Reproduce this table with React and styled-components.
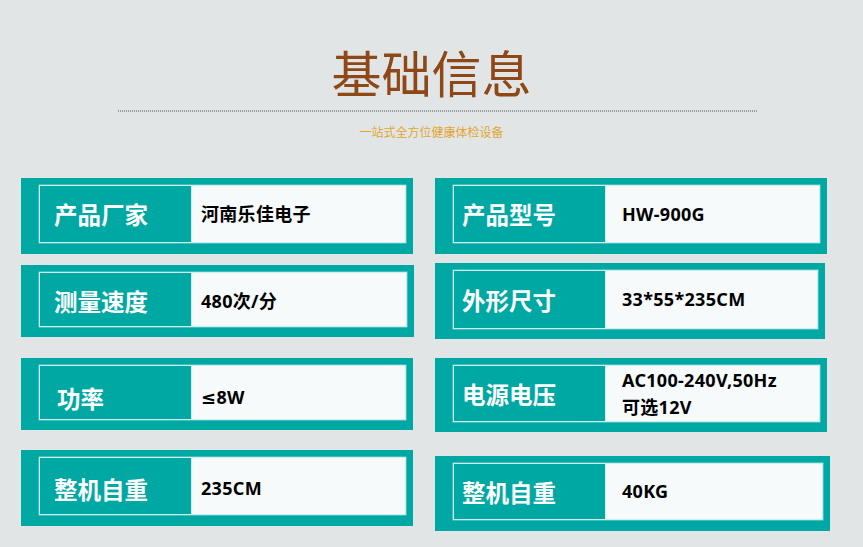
import React from "react";
import styled, { createGlobalStyle } from "styled-components";

const Global = createGlobalStyle`
  html, body { margin: 0; padding: 0; background: #e1e5e6; }
  body { font-family: "Noto Sans CJK SC", "Noto Sans", sans-serif; }
`;

const Page = styled.div`
  width: 863px;
  height: 547px;
  background: #e1e5e6;
  overflow: hidden;
`;

const Header = styled.header`
  display: flex;
  flex-direction: column;
  align-items: center;
  padding-top: 38px;
`;

const Title = styled.h1`
  margin: 0;
  font-size: 50px;
  line-height: 66px;
  font-weight: 400;
  color: #8e4716;
  letter-spacing: 0;
`;

const Rule = styled.div`
  width: 640px;
  height: 2px;
  margin: 6px 0 0 12px;
  background: repeating-linear-gradient(90deg, #9a9a9a 0 1px, transparent 1px 2px);
`;

const Subtitle = styled.p`
  margin: 12px 0 0;
  font-size: 12px;
  line-height: 16px;
  color: #e2a52e;
`;

const Grid = styled.main`
  display: flex;
  gap: 22px;
  padding: 0 0 0 21px;
  margin-top: 38px;
`;

const Column = styled.div`
  display: flex;
  flex-direction: column;
  width: 392px;
`;

const Card = styled.section`
  box-sizing: border-box;
  width: ${(p) => p.$w}px;
  height: ${(p) => p.$h}px;
  margin-top: ${(p) => p.$mt}px;
  padding: 7px 7px ${(p) => p.$pb}px 18px;
  background: #00a8a4;
  display: flex;
`;

const Inner = styled.div`
  flex: 1;
  display: flex;
  border: 1px solid #cdeeed;
  box-shadow: 0 0 0 0.5px rgba(255,255,255,0.5);
`;

const Label = styled.div`
  width: 152px;
  flex: none;
  display: flex;
  align-items: center;
  padding-left: ${(p) => p.$pl}px;
  padding-top: ${(p) => p.$dy || 0}px;
  box-sizing: border-box;
  background: #00a8a4;
  color: #ffffff;
  font-size: 23.5px;
  font-weight: 700;
  border-right: 1px solid #cdeeed;
`;

const Value = styled.div`
  flex: 1;
  display: flex;
  flex-direction: column;
  justify-content: center;
  padding-left: ${(p) => p.$pl}px;
  padding-top: ${(p) => p.$dy || 0}px;
  box-sizing: border-box;
  background: #f6fafb;
  color: #000;
  font-family: "Noto Sans", "DejaVu Sans", "Noto Sans CJK SC", sans-serif;
  font-size: 18px;
  font-weight: 700;
  line-height: 27px;
  letter-spacing: 0.3px;
`;

const left = [
  { label: "产品厂家", value: ["河南乐佳电子"], w: 392, h: 76, mt: 0, pb: 11, lpl: 14, dy: 0 },
  { label: "测量速度", value: ["480次/分"], w: 393, h: 72, mt: 11, pb: 10, lpl: 14, dy: 3 },
  { label: "功率", value: ["≤8W"], w: 392, h: 72, mt: 21, pb: 10, lpl: 17, dy: 10 },
  { label: "整机自重", value: ["235CM"], w: 392, h: 76, mt: 20, pb: 11, lpl: 14, dy: 5 },
];

const right = [
  { label: "产品型号", value: ["HW-900G"], w: 392, h: 76, mt: 0, pb: 11, lpl: 8, dy: -2 },
  { label: "外形尺寸", value: ["33*55*235CM"], w: 390, h: 76, mt: 9, pb: 10, lpl: 8, dy: -6 },
  { label: "电源电压", value: ["AC100-240V,50Hz", "可选12V"], w: 392, h: 74, mt: 19, pb: 10, lpl: 8, dy: 0 },
  { label: "整机自重", value: ["40KG"], w: 395, h: 75, mt: 24, pb: 11, lpl: 8, dy: -6 },
];

function InfoCard({ item, valuePl }) {
  return (
    <Card $w={item.w} $h={item.h} $mt={item.mt} $pb={item.pb}>
      <Inner>
        <Label $pl={item.lpl} $dy={item.dy > 0 ? item.dy : 0}>{item.label}</Label>
        <Value $pl={valuePl} $dy={item.dy}>
          {item.value.map((v) => (
            <span key={v}>{v}</span>
          ))}
        </Value>
      </Inner>
    </Card>
  );
}

export default function App() {
  return (
    <Page>
      <Global />
      <Header>
        <Title>基础信息</Title>
        <Rule />
        <Subtitle>一站式全方位健康体检设备</Subtitle>
      </Header>
      <Grid>
        <Column>
          {left.map((it) => (
            <InfoCard key={it.label + it.value[0]} item={it} valuePl={9} />
          ))}
        </Column>
        <Column>
          {right.map((it) => (
            <InfoCard key={it.label + it.value[0]} item={it} valuePl={16} />
          ))}
        </Column>
      </Grid>
    </Page>
  );
}
